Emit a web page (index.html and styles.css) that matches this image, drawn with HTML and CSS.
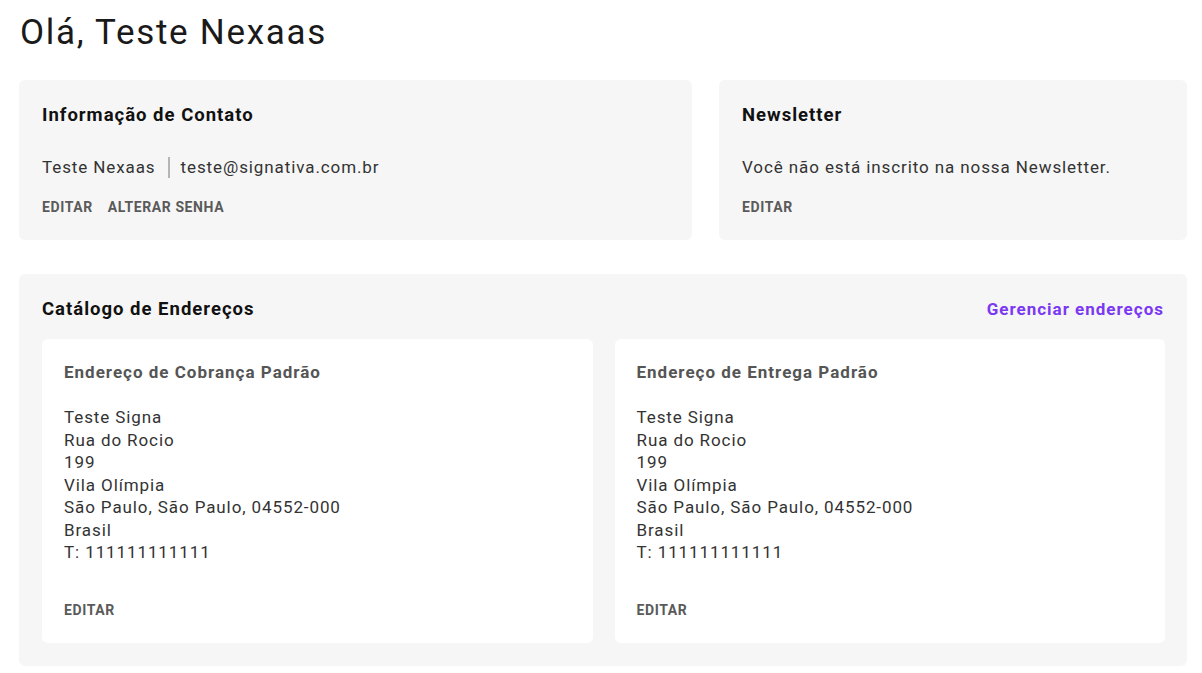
FILE: index.html
```html
<!DOCTYPE html>
<html lang="pt-BR">
<head>
<meta charset="utf-8">
<title>Minha conta</title>
<link rel="stylesheet" href="styles.css">
</head>
<body>
<main class="page">
  <h1 class="title">Olá, Teste Nexaas</h1>
  <div class="top-grid">
    <section class="card">
      <h2 class="card-title">Informação de Contato</h2>
      <p class="card-text">Teste Nexaas<span class="sep"></span>teste@signativa.com.br</p>
      <div class="actions">
        <a class="action" href="#">Editar</a>
        <a class="action" href="#">Alterar senha</a>
      </div>
    </section>
    <section class="card">
      <h2 class="card-title">Newsletter</h2>
      <p class="card-text">Você não está inscrito na nossa Newsletter.</p>
      <div class="actions">
        <a class="action" href="#">Editar</a>
      </div>
    </section>
  </div>
  <section class="card book">
    <div class="book-head">
      <h2 class="card-title">Catálogo de Endereços</h2>
      <a class="manage" href="#">Gerenciar endereços</a>
    </div>
    <div class="addr-grid">
      <div class="addr">
        <h3 class="addr-title">Endereço de Cobrança Padrão</h3>
        <address class="addr-body">Teste Signa<br>Rua do Rocio<br>199<br>Vila Olímpia<br>São Paulo, São Paulo, 04552-000<br>Brasil<br>T: 111111111111</address>
        <a class="action" href="#">Editar</a>
      </div>
      <div class="addr">
        <h3 class="addr-title">Endereço de Entrega Padrão</h3>
        <address class="addr-body">Teste Signa<br>Rua do Rocio<br>199<br>Vila Olímpia<br>São Paulo, São Paulo, 04552-000<br>Brasil<br>T: 111111111111</address>
        <a class="action" href="#">Editar</a>
      </div>
    </div>
  </section>
</main>
</body>
</html>
```
FILE: styles.css
```css
* { box-sizing: border-box; }
html, body { margin: 0; padding: 0; background: #fff; }
body {
  font-family: Roboto, "Liberation Sans", Arial, sans-serif;
  color: #333;
}
.page {
  padding: 10px 15px 0 19px;
}
.title {
  margin: 0 0 0 1px;
  font-size: 35px;
  font-weight: 400;
  letter-spacing: 1.7px;
  line-height: 46px;
  color: #1a1a1a;
  height: 70px;
}
.top-grid {
  display: grid;
  grid-template-columns: 673fr 468fr;
  column-gap: 27px;
  margin-bottom: 34px;
}
.card {
  background: #f6f6f6;
  border-radius: 6px;
  padding: 23px 23px 25px;
}
.card-title {
  margin: 0;
  font-size: 18.5px;
  font-weight: 700;
  letter-spacing: 1px;
  line-height: 24px;
  color: #111;
}
.card-text {
  margin: 26px 0 0;
  font-size: 17px;
  letter-spacing: 0.9px;
  line-height: 28px;
  color: #333;
  display: flex;
  align-items: center;
}
.sep {
  display: inline-block;
  width: 2px;
  height: 21px;
  background: #b5b5b5;
  margin: 0 11px 0 12px;
}
.actions {
  display: flex;
  gap: 15px;
  margin-top: 18px;
}
.action {
  font-size: 14px;
  font-weight: 700;
  line-height: 16px;
  text-transform: uppercase;
  color: #5a5a5a;
  text-decoration: none;
  letter-spacing: 0.6px;
}
.book {
  padding: 23px 22px 23px 23px;
}
.book-head {
  display: flex;
  justify-content: space-between;
  align-items: center;
  margin-bottom: 18px;
}
.manage {
  font-size: 17px;
  font-weight: 700;
  letter-spacing: 1px;
  color: #7b38f2;
  text-decoration: none;
  margin-right: 1px;
}
.addr-grid {
  display: grid;
  grid-template-columns: 1fr 1fr;
  column-gap: 22px;
}
.addr {
  background: #fff;
  border-radius: 6px;
  padding: 23px 22px 25px;
  display: flex;
  flex-direction: column;
  align-items: flex-start;
}
.addr-title {
  margin: 0;
  font-size: 17px;
  font-weight: 700;
  letter-spacing: 1px;
  line-height: 20px;
  color: #555;
}
.addr-body {
  margin: 24px 0 0;
  font-style: normal;
  font-size: 17px;
  letter-spacing: 0.9px;
  line-height: 22.5px;
  color: #333;
}
.addr .action {
  margin-top: 38px;
}
```
